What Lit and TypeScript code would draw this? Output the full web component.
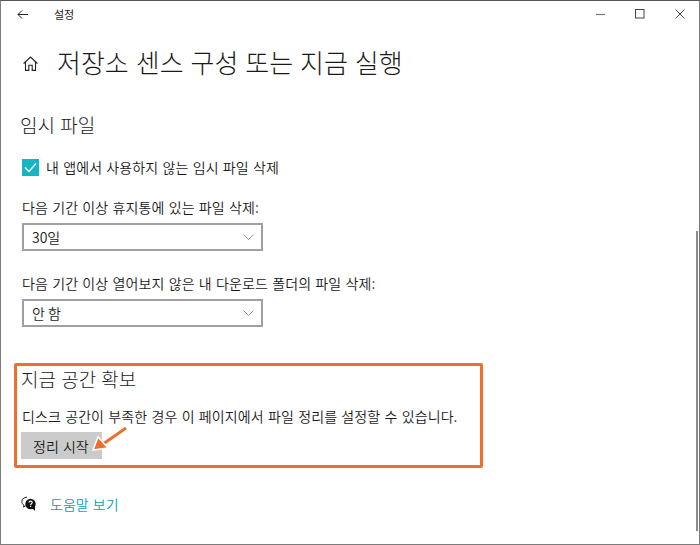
import { LitElement, html, css } from "lit";
import { customElement } from "lit/decorators.js";

@customElement("app-root")
export class AppRoot extends LitElement {
  static styles = css`
    :host {
      display: block;
      width: 700px;
      height: 545px;
      overflow: hidden;
      font-family: "Noto Sans CJK KR", "Noto Sans", sans-serif;
      color: #1a1a1a;
      background: #fff;
    }
    .window {
      position: relative;
      box-sizing: border-box;
      width: 700px;
      height: 545px;
      background: #fff;
      border: 1px solid #7c7c7c;
      border-top-color: #555;
      display: flex;
      flex-direction: column;
      padding-left: 20px;
    }
    .titlebar {
      height: 26px;
      display: flex;
      align-items: center;
      margin-left: -20px;
    }
    .back { margin-left: 16px; width: 11px; height: 9px; display: block; }
    .apptitle { margin-left: 26px; font-size: 11px; line-height: 14px; }
    .controls { margin-left: auto; display: flex; align-items: center; gap: 30px; margin-right: 14px; }
    .controls svg { display: block; width: 10px; height: 10px; }
    .heading { display: flex; align-items: center; height: 36px; margin-top: 17px; }
    .home { width: 15px; height: 15px; display: block; margin-left: 2px; margin-top: 3px; }
    h1 { margin: 0 0 0 19px; font-size: 26px; font-weight: 300; line-height: 36px; white-space: nowrap; word-spacing: 1.2px; }
    h2 { margin: 0; font-size: 19px; font-weight: 300; line-height: 26px; white-space: nowrap; word-spacing: 1px; }
    .temp { margin: 32px 0 0 -1px; }
    .check { display: flex; align-items: center; gap: 7px; margin-top: 19px; height: 20px; padding-left: 1px; }
    .box { width: 17px; height: 17px; background: #16b5c4; display: flex; align-items: center; justify-content: center; }
    .box svg { width: 13px; height: 11px; display: block; }
    .txt { font-size: 14px; line-height: 20px; white-space: nowrap; letter-spacing: 0.1px; word-spacing: 1px; font-weight: 350; }
    .label { margin-top: 20px; padding-left: 1px; }
    .select {
      box-sizing: border-box;
      width: 241px;
      height: 28px;
      margin: 6px 0 0 1px;
      border: 2px solid #a0a0a0;
      display: flex;
      align-items: center;
      justify-content: space-between;
      padding: 0 7px 0 8px;
      font-size: 14px;
      font-weight: 350;
    }
    .select svg { width: 11px; height: 6px; display: block; }
    .label.second { margin-top: 22px; }
    .free {
      box-sizing: border-box;
      position: relative;
      width: 469px;
      height: 105px;
      margin: 36px 0 0 -7px;
      border: 3px solid #ee6f2d;
      border-radius: 2px;
      padding: 0 0 0 4px;
    }
    .desc { margin-top: 14px; padding-left: 1px; }
    .btn {
      display: flex;
      align-items: center;
      box-sizing: border-box;
      width: 81px;
      height: 27px;
      margin-top: 6px;
      padding-left: 12px;
      background: #cbcbcb;
      font-size: 14px;
      font-weight: 350;
      word-spacing: 1px;
      white-space: nowrap;
    }
    .arrow { position: absolute; left: 69px; top: 54px; width: 42px; height: 32px; display: block; }
    .help { display: flex; align-items: center; margin-top: 26px; height: 20px; }
    .help svg { width: 16px; height: 16px; display: block; }
    .help a { margin-left: 13px; font-size: 14px; font-weight: 350; color: #0f9fb3; text-decoration: none; word-spacing: 1px; }
    .thumb { position: absolute; left: 695px; top: 230px; width: 2px; height: 300px; background: #8c8c8c; }
  `;

  render() {
    return html`
      <div class="window">
        <div class="titlebar">
          <svg class="back" viewBox="0 0 11 9" fill="none" stroke="#222" stroke-width="1"><path d="M11 4.5H1M5 .5l-4 4 4 4"/></svg>
          <span class="apptitle">설정</span>
          <div class="controls">
            <svg viewBox="0 0 10 10" fill="none" stroke="#777" stroke-width="1.2"><path d="M1 5.5h9"/></svg>
            <svg viewBox="0 0 10 10" fill="none" stroke="#444" stroke-width="1"><rect x=".5" y=".5" width="8.5" height="8.5"/></svg>
            <svg viewBox="0 0 10 10" fill="none" stroke="#444" stroke-width="1"><path d="M.5.5l9 9M9.5.5l-9 9"/></svg>
          </div>
        </div>
        <div class="heading">
          <svg class="home" viewBox="0 0 15 15" fill="none" stroke="#222" stroke-width="1.1">
            <path d="M.6 7.5L7.5 1l6.9 6.5M2.5 6v8.4h3.3V9.3h3.4v5.1h3.3V6"/>
          </svg>
          <h1>저장소 센스 구성 또는 지금 실행</h1>
        </div>
        <h2 class="temp">임시 파일</h2>
        <div class="check">
          <span class="box"><svg viewBox="0 0 13 11" fill="none" stroke="#fff" stroke-width="1.4"><path d="M1 5.5l4 4 7-8"/></svg></span>
          <span class="txt">내 앱에서 사용하지 않는 임시 파일 삭제</span>
        </div>
        <div class="txt label">다음 기간 이상 휴지통에 있는 파일 삭제:</div>
        <div class="select"><span>30일</span>${this.chevron()}</div>
        <div class="txt label second">다음 기간 이상 열어보지 않은 내 다운로드 폴더의 파일 삭제:</div>
        <div class="select"><span>안 함</span>${this.chevron()}</div>
        <section class="free">
          <h2>지금 공간 확보</h2>
          <div class="txt desc">디스크 공간이 부족한 경우 이 페이지에서 파일 정리를 설정할 수 있습니다.</div>
          <div class="btn">정리 시작</div>
          <svg class="arrow" viewBox="0 0 42 32">
            <path d="M40 8L17 24" stroke="#ee6f2d" stroke-width="2.8" fill="none"/>
            <path d="M7 30L12 17l10 11z" fill="#ee6f2d" stroke="#fff" stroke-width="1.5"/>
          </svg>
        </section>
        <div class="help">
          <svg viewBox="0 0 16 16">
            <path d="M6 1.2C3 1.2.8 3 .8 5.5c0 1.6.9 2.9 2.2 3.7L2.5 11l2.3-1.3" fill="none" stroke="#222" stroke-width="1"/>
            <circle cx="9.5" cy="8" r="5.2" fill="#111"/>
            <path d="M11 12l3 3v-5z" fill="#111"/>
            <path d="M8 6.6c0-2 3.2-2 3.2 0 0 1.2-1.6 1.2-1.6 2.6M9.6 10v1" fill="none" stroke="#fff" stroke-width="1.1"/>
          </svg>
          <a href="#">도움말 보기</a>
        </div>
        <div class="thumb"></div>
      </div>
    `;
  }

  chevron() {
    return html`<svg viewBox="0 0 11 6" fill="none" stroke="#999" stroke-width="1"><path d="M.5.5l5 5 5-5"/></svg>`;
  }
}
